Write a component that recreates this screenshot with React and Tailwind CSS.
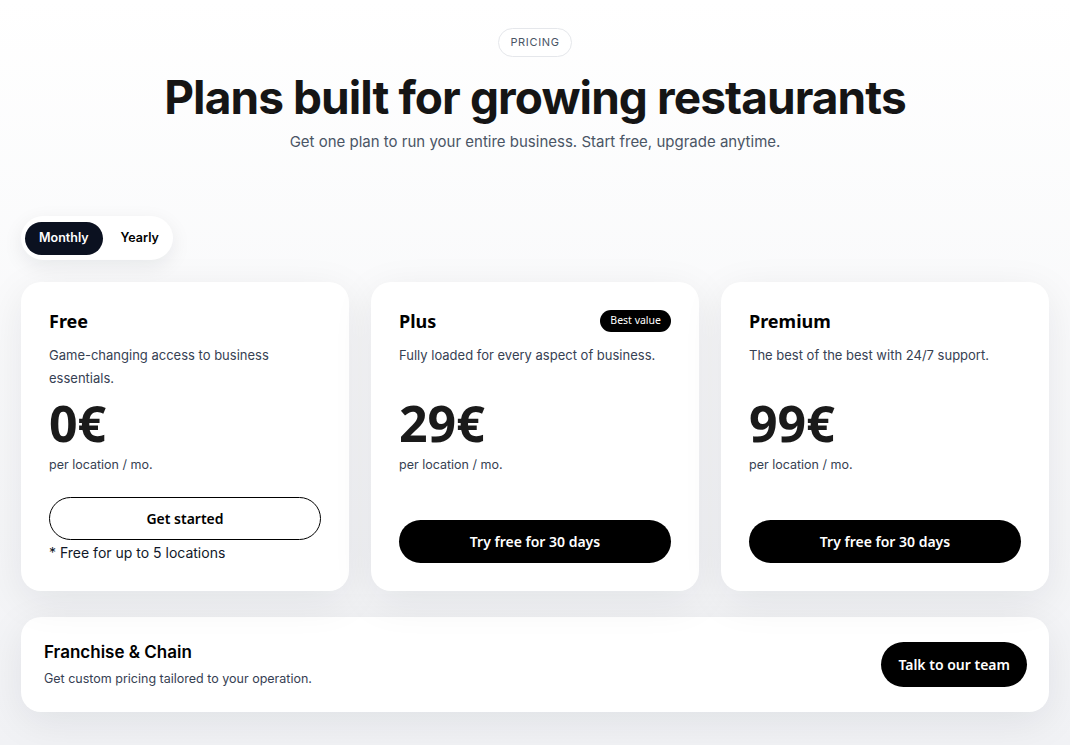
import { useState } from 'react';

const plans = [
  {
    name: 'Free',
    desc: 'Game-changing access to business essentials.',
    price: '0€',
    cta: 'Get started',
    outline: true,
    note: '* Free for up to 5 locations',
  },
  {
    name: 'Plus',
    desc: 'Fully loaded for every aspect of business.',
    price: '29€',
    cta: 'Try free for 30 days',
    badge: 'Best value',
  },
  {
    name: 'Premium',
    desc: 'The best of the best with 24/7 support.',
    price: '99€',
    cta: 'Try free for 30 days',
  },
];

const display = { fontFamily: 'Inter, "Liberation Sans", sans-serif' };
const rounded = { fontFamily: '"Noto Sans", "Open Sans", sans-serif' };

function PlanCard({ plan }) {
  return (
    <div className="flex flex-col rounded-[20px] bg-white p-7 shadow-[0_10px_40px_rgba(15,23,42,0.08)]">
      <div className="flex h-[22px] items-center justify-between">
        <h3 style={rounded} className="text-[18px] font-bold text-black">{plan.name}</h3>
        {plan.badge && (
          <span style={rounded} className="rounded-full bg-black px-[10px] py-[3px] text-[10.5px] text-white">
            {plan.badge}
          </span>
        )}
      </div>
      <p className="mt-3 min-h-[46px] text-[13px] leading-[23px] text-gray-700">{plan.desc}</p>
      <div style={rounded} className="mt-[8px] text-[50px] font-bold leading-[50px] text-[#1a1a1a]">
        {plan.price}
      </div>
      <p className="mt-[7px] text-[12.5px] leading-5 text-gray-700">per location / mo.</p>
      {plan.outline ? (
        <>
          <button
            style={rounded}
            className="mt-[22px] h-[43px] w-full rounded-full border border-black bg-white text-[14px] font-semibold text-black"
          >
            {plan.cta}
          </button>
          <p className="mt-[3px] text-[14px] leading-5 text-gray-900">{plan.note}</p>
        </>
      ) : (
        <button
          style={rounded}
          className="mt-auto h-[43px] w-full rounded-full bg-black text-[14px] font-semibold text-white"
        >
          {plan.cta}
        </button>
      )}
    </div>
  );
}

export default function App() {
  const [billing, setBilling] = useState('monthly');

  return (
    <div
      style={{ fontFamily: 'Inter, "Noto Sans", sans-serif' }}
      className="min-h-[745px] bg-gradient-to-b from-white to-[#f1f2f5] px-[21px] pb-8 pt-7"
    >
      <div className="flex flex-col items-center">
        <span className="rounded-full border border-gray-200 bg-white px-[11px] py-[5px] text-[11px] tracking-[0.06em] text-gray-600">
          PRICING
        </span>
        <h1 style={display} className="mt-[13px] text-[46px] font-bold leading-[54px] tracking-[-0.02em] text-[#151515]">
          Plans built for growing restaurants
        </h1>
        <p className="mt-[7px] text-[15px] text-gray-600">
          Get one plan to run your entire business. Start free, upgrade anytime.
        </p>
      </div>

      <div className="mt-[63px] flex">
        <div className="flex h-[44px] items-center rounded-full bg-white px-[4px] shadow-[0_6px_20px_rgba(15,23,42,0.08)]">
          <button
            onClick={() => setBilling('monthly')}
            className={`h-[33px] rounded-full px-[14px] text-[12.5px] font-semibold ${
              billing === 'monthly' ? 'bg-[#0b1120] text-white' : 'text-black'
            }`}
          >
            Monthly
          </button>
          <button
            onClick={() => setBilling('yearly')}
            className={`h-[33px] rounded-full pl-[18px] pr-[10px] text-[12.5px] font-semibold ${
              billing === 'yearly' ? 'bg-[#0b1120] text-white' : 'text-black'
            }`}
          >
            Yearly
          </button>
        </div>
      </div>

      <div className="mt-[22px] grid h-[309px] grid-cols-3 gap-[22px]">
        {plans.map((p) => (
          <PlanCard key={p.name} plan={p} />
        ))}
      </div>

      <div className="mt-[26px] flex h-[95px] items-center justify-between rounded-[20px] bg-white pl-[23px] pr-[22px] shadow-[0_10px_40px_rgba(15,23,42,0.08)]">
        <div>
          <h3 style={display} className="text-[17px] font-semibold leading-6 text-black">Franchise &amp; Chain</h3>
          <p className="mt-[6px] text-[12.5px] text-gray-700">Get custom pricing tailored to your operation.</p>
        </div>
        <button
          style={rounded}
          className="h-[45px] rounded-full bg-black px-[17px] text-[14px] font-semibold text-white"
        >
          Talk to our team
        </button>
      </div>
    </div>
  );
}
